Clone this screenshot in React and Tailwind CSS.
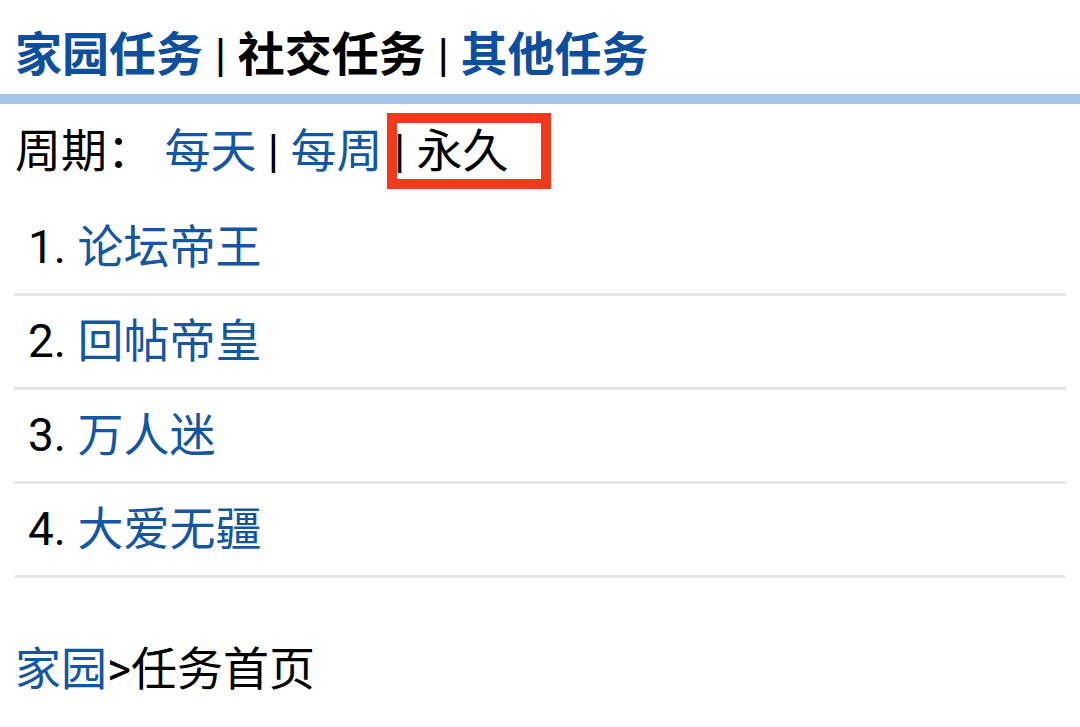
const font = {
  fontFamily: '"Roboto", "Noto Sans CJK SC", sans-serif',
};

const tasks = ["论坛帝王", "回帖帝皇", "万人迷", "大爱无疆"];

export default function App() {
  return (
    <div className="min-h-[727px] bg-white text-black" style={font}>
      {/* top tabs */}
      <div className="h-[94px] pt-[22px] pl-[15px] text-[47px] leading-[66px] whitespace-pre">
        <span className="font-bold text-[#0d4f9d]">家园任务</span>
        <span> | </span>
        <span className="font-bold">社交任务</span>
        <span> | </span>
        <span className="font-bold text-[#0d4f9d]">其他任务</span>
      </div>
      <div className="h-[10px] bg-[#a2c5ea]" />

      {/* period filter */}
      <div className="h-[94px] pl-[15px] text-[46px] leading-[94px] whitespace-pre">
        <span>周期： </span>
        <span className="text-[#1456a0]">每天</span>
        <span> | </span>
        <span className="text-[#1456a0]">每周</span>
        <span className="relative inline-block">
          <span> | 永久</span>
          <span className="absolute left-[5px] top-[9px] w-[164px] h-[76px] border-[10px] border-[#ee3b1d]" />
        </span>
      </div>

      {/* task list */}
      <ul className="mt-[4px] ml-[14px] mr-[14px]">
        {tasks.map((t, i) => (
          <li
            key={t}
            className="h-[94px] border-b-[3px] border-[#e5e6ea] pl-[14px] text-[46px] leading-[91px] whitespace-pre"
          >
            <span>{i + 1}. </span>
            <span className="text-[#1456a0]">{t}</span>
          </li>
        ))}
      </ul>

      {/* breadcrumb */}
      <div className="mt-[61px] pl-[15px] text-[46px] leading-[60px]">
        <span className="text-[#1456a0]">家园</span>
        <span>&gt;任务首页</span>
      </div>
    </div>
  );
}
